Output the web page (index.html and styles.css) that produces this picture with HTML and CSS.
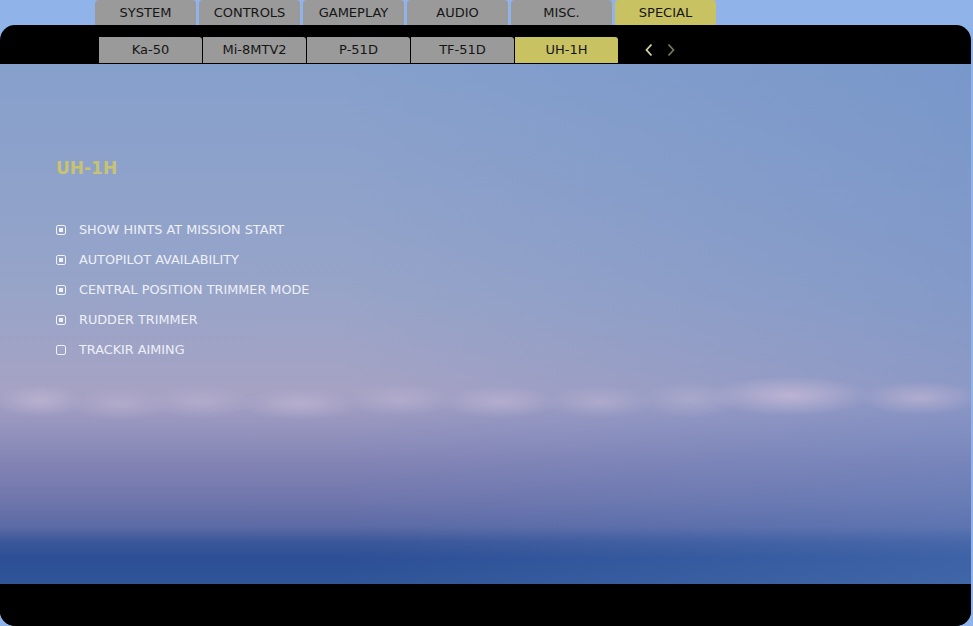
FILE: index.html
```html
<!DOCTYPE html>
<html>
<head>
<meta charset="utf-8">
<link rel="stylesheet" href="styles.css">
</head>
<body>
<div class="top-tabs">
  <div class="tab">SYSTEM</div>
  <div class="tab">CONTROLS</div>
  <div class="tab">GAMEPLAY</div>
  <div class="tab">AUDIO</div>
  <div class="tab">MISC.</div>
  <div class="tab active">SPECIAL</div>
</div>
<div class="panel">
  <div class="subbar">
    <div class="subtab">Ka-50</div>
    <div class="subtab">Mi-8MTV2</div>
    <div class="subtab">P-51D</div>
    <div class="subtab">TF-51D</div>
    <div class="subtab active">UH-1H</div>
    <div class="arrows">
      <svg class="arrow" width="10" height="14" viewBox="0 0 10 14"><path d="M7.5 1.5 L2.5 7 L7.5 12.5" fill="none" stroke="#d4d4a4" stroke-width="1.8"/></svg>
      <svg class="arrow" width="10" height="14" viewBox="0 0 10 14"><path d="M2.5 1.5 L7.5 7 L2.5 12.5" fill="none" stroke="#77765c" stroke-width="1.8"/></svg>
    </div>
  </div>
  <div class="content">
    <h1 class="title">UH-1H</h1>
    <ul class="options">
      <li class="option"><span class="check on"></span>SHOW HINTS AT MISSION START</li>
      <li class="option"><span class="check on"></span>AUTOPILOT AVAILABILITY</li>
      <li class="option"><span class="check on"></span>CENTRAL POSITION TRIMMER MODE</li>
      <li class="option"><span class="check on"></span>RUDDER TRIMMER</li>
      <li class="option"><span class="check"></span>TRACKIR AIMING</li>
    </ul>
  </div>
  <div class="footer"></div>
</div>
</body>
</html>
```
FILE: styles.css
```css
html, body {
  margin: 0;
  padding: 0;
}
body {
  background: #90b3ea;
  font-family: "DejaVu Sans", sans-serif;
  width: 973px;
  height: 626px;
  overflow: hidden;
}
.top-tabs {
  display: flex;
  gap: 3px;
  padding-left: 95px;
  height: 25px;
}
.tab {
  width: 101px;
  height: 25px;
  background: #9a9a9a;
  border-radius: 4px 4px 0 0;
  color: #151515;
  font-size: 13px;
  line-height: 25px;
  text-align: center;
}
.tab.active {
  background: #c9c263;
}
.panel {
  width: 971px;
  height: 601px;
  background: #000;
  border-radius: 15px;
  overflow: hidden;
  display: flex;
  flex-direction: column;
}
.subbar {
  height: 39px;
  box-sizing: border-box;
  padding: 12px 0 1px 99px;
  display: flex;
  gap: 1px;
  align-items: stretch;
}
.subtab {
  width: 103px;
  background: #9a9a9a;
  border-radius: 0 3px 0 0;
  color: #151515;
  font-size: 13px;
  line-height: 26px;
  text-align: center;
}
.subtab.active {
  background: #c9c263;
}
.arrows {
  display: flex;
  align-items: center;
  gap: 12px;
  padding-left: 25px;
}
.arrow {
  display: block;
}
.content {
  height: 520px;
  box-sizing: border-box;
  padding: 93px 0 0 56px;
  background:
    radial-gradient(ellipse 45px 16px at 40px 337px, rgba(200,188,215,0.6), transparent),
    radial-gradient(ellipse 50px 16px at 120px 340px, rgba(195,185,212,0.5), transparent),
    radial-gradient(ellipse 55px 16px at 200px 338px, rgba(195,185,212,0.5), transparent),
    radial-gradient(ellipse 60px 16px at 300px 340px, rgba(200,188,215,0.55), transparent),
    radial-gradient(ellipse 55px 16px at 400px 336px, rgba(195,185,212,0.5), transparent),
    radial-gradient(ellipse 60px 16px at 500px 338px, rgba(200,188,215,0.55), transparent),
    radial-gradient(ellipse 55px 16px at 600px 338px, rgba(195,185,212,0.5), transparent),
    radial-gradient(ellipse 80px 20px at 790px 332px, rgba(205,190,218,0.7), transparent),
    radial-gradient(ellipse 50px 18px at 690px 336px, rgba(195,185,212,0.45), transparent),
    radial-gradient(ellipse 60px 17px at 920px 334px, rgba(200,186,214,0.6), transparent),
    linear-gradient(to right, rgba(120,150,200,0) 35%, rgba(95,135,200,0.35) 100%),
    linear-gradient(to bottom,
      #86a0cc 0%,
      #8fa2ca 25%,
      #98a4c8 45%,
      #a2a3c5 58%,
      #a6a2c4 63%,
      #9594be 70%,
      #8283b4 77%,
      #6f76ac 84%,
      #5c6aa5 89%,
      #3a5699 92%,
      #2c4f95 95%,
      #2f5597 100%);
  color: #eef0f6;
}
.title {
  margin: 0;
  height: 22px;
  font-size: 17px;
  font-weight: bold;
  line-height: 22px;
  color: #c8c372;
}
.options {
  list-style: none;
  margin: 0;
  padding: 41px 0 0 0;
  display: flex;
  flex-direction: column;
  gap: 11px;
}
.option {
  display: flex;
  align-items: center;
  height: 19px;
  font-size: 12.8px;
  color: #eef0f8;
}
.check {
  width: 10px;
  height: 10px;
  box-sizing: border-box;
  border: 1px solid #f0f0f8;
  border-radius: 2px;
  margin-right: 13px;
  display: flex;
  align-items: center;
  justify-content: center;
}
.check.on::after {
  content: "";
  width: 4px;
  height: 4px;
  background: #f0f0f8;
}
.footer {
  flex: 1;
  background: #000;
}
```
